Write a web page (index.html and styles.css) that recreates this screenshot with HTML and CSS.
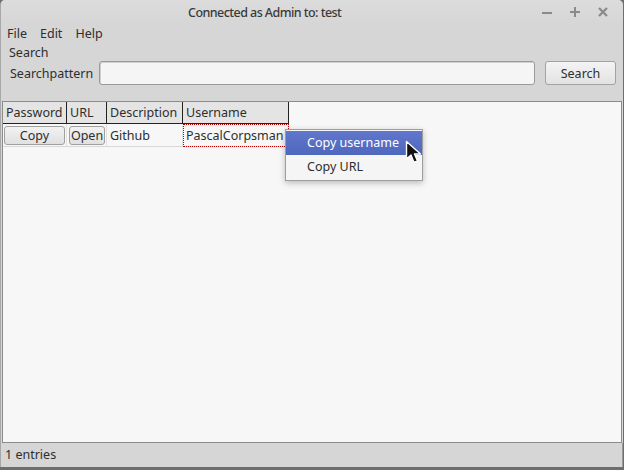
FILE: index.html
```
<!DOCTYPE html>
<html>
<head>
<meta charset="utf-8">
<link rel="stylesheet" href="styles.css">
</head>
<body>
<div class="window">
  <div class="titlebar">
    <span class="title">Connected as Admin to: test</span>
    <div class="controls">
      <svg width="12" height="12" viewBox="0 0 12 12"><rect x="1" y="6" width="10" height="2" fill="#8a8a8a"/></svg>
      <svg width="12" height="12" viewBox="0 0 12 12"><rect x="1" y="5" width="10" height="2" fill="#8a8a8a"/><rect x="5" y="1" width="2" height="10" fill="#8a8a8a"/></svg>
      <svg width="12" height="12" viewBox="0 0 12 12"><path d="M2 2 L10 10 M10 2 L2 10" stroke="#8a8a8a" stroke-width="2.2"/></svg>
    </div>
  </div>
  <div class="menubar">
    <span>File</span><span>Edit</span><span>Help</span>
  </div>
  <div class="group-label">Search</div>
  <div class="search-row">
    <span class="label">Searchpattern</span>
    <div class="input"></div>
    <div class="button search-btn">Search</div>
  </div>
  <div class="grid">
    <div class="row header">
      <div class="cell c1">Password</div>
      <div class="cell c2">URL</div>
      <div class="cell c3">Description</div>
      <div class="cell c4">Username</div>
    </div>
    <div class="row data">
      <div class="cell c1"><div class="cellbtn">Copy</div></div>
      <div class="cell c2"><div class="cellbtn">Open</div></div>
      <div class="cell c3">Github</div>
      <div class="cell c4 focus">PascalCorpsman</div>
    </div>
  </div>
  <div class="status">1 entries</div>

  <div class="popup">
    <div class="item active">Copy username</div>
    <div class="item">Copy URL</div>
  </div>
  <svg class="cursor" width="20" height="26" viewBox="0 0 20 26">
    <path d="M1.5 1.5 L1.5 19 L6 15 L9 22.5 L12.5 21 L9.5 14 L15.5 14 Z" fill="#111" stroke="#fff" stroke-width="1.4" stroke-linejoin="round"/>
  </svg>
</div>
</body>
</html>
```
FILE: styles.css
```
html, body {
  margin: 0;
  padding: 0;
  background: #6e6e6e;
}
body {
  font-family: "Noto Sans", "DejaVu Sans", sans-serif;
  font-size: 12.5px;
  color: #2e2e2e;
}
.window {
  position: relative;
  width: 622px;
  height: 467px;
  background: #d6d6d6;
  border-radius: 5px 5px 0 0;
  border-left: 1px solid #a8a8a8;
  display: flex;
  flex-direction: column;
  overflow: hidden;
}
.titlebar {
  height: 24px;
  display: flex;
  align-items: center;
  position: relative;
  background: linear-gradient(#dcdcdc, #d6d6d6);
  flex: none;
  padding-left: 187px;
}
.title {
  font-weight: 500;
  color: #3a3a3a;
  font-size: 12.5px;
  letter-spacing: -0.55px;
}
.controls {
  position: absolute;
  right: 14px;
  top: 6px;
  display: flex;
  gap: 16px;
}
.menubar {
  height: 19px;
  display: flex;
  align-items: center;
  padding-left: 6px;
  flex: none;
}
.menubar span {
  margin-right: 13px;
}
.group-label {
  height: 18px;
  line-height: 19px;
  padding-left: 8px;
  flex: none;
}
.search-row {
  display: flex;
  align-items: center;
  height: 24px;
  padding-left: 9px;
  flex: none;
}
.label {
  width: 89px;
}
.input {
  width: 434px;
  height: 22px;
  border: 1px solid #9a9a9a;
  border-radius: 3px;
  background: #f5f5f5;
  box-shadow: inset 1px 1px 0 #d0d0d0;
}
.button {
  border: 1px solid #a2a2a2;
  border-radius: 3px;
  background: linear-gradient(#f4f4f4, #e2e2e2);
  display: flex;
  align-items: center;
  justify-content: center;
}
.search-btn {
  margin-left: 10px;
  width: 69px;
  height: 22px;
}
.grid {
  margin: 16px 1px 0 1px;
  flex: 1;
  background: #f7f7f7;
  border: 1px solid #8c8c8c;
}
.row {
  display: flex;
}
.header {
  height: 22px;
}
.header .cell {
  background: #e4e4e4;
  border-right: 1px solid #222;
  border-bottom: 1px solid #222;
  display: flex;
  align-items: center;
  padding-left: 3px;
  box-sizing: border-box;
}
.c1 { width: 64px; }
.c2 { width: 40px; }
.c3 { width: 76px; }
.c4 { width: 106px; }
.data {
  height: 23px;
}
.data .cell {
  border-right: 1px solid #e2e2e2;
  border-bottom: 1px solid #d8d8d8;
  box-sizing: border-box;
  display: flex;
  align-items: center;
  padding-left: 3px;
}
.data .c1, .data .c2 {
  padding-left: 1px;
}
.cellbtn {
  border: 1px solid #a0a0a0;
  border-radius: 3px;
  background: linear-gradient(#f2f2f2, #e0e0e0);
  height: 17px;
  display: flex;
  align-items: center;
  justify-content: center;
  width: 100%;
  margin-right: 1px;
}
.data .c2 .cellbtn {
  margin-left: 1px;
}
.focus {
  outline: 1px dotted #c00000;
  outline-offset: -1px;
}
.status {
  height: 24px;
  line-height: 24px;
  padding-left: 4px;
  flex: none;
  border-right: 1px solid #999;
}
.popup {
  position: absolute;
  left: 284px;
  top: 129px;
  width: 136px;
  background: #f5f5f5;
  border: 1px solid #9e9e9e;
  box-shadow: 0 2px 6px rgba(0,0,0,0.25);
  padding: 1px 0;
}
.item {
  height: 24px;
  line-height: 24px;
  padding-left: 21px;
}
.item.active {
  background: linear-gradient(#6077cc, #4e66bd);
  color: #fff;
}
.cursor {
  position: absolute;
  left: 404px;
  top: 140px;
}
```
